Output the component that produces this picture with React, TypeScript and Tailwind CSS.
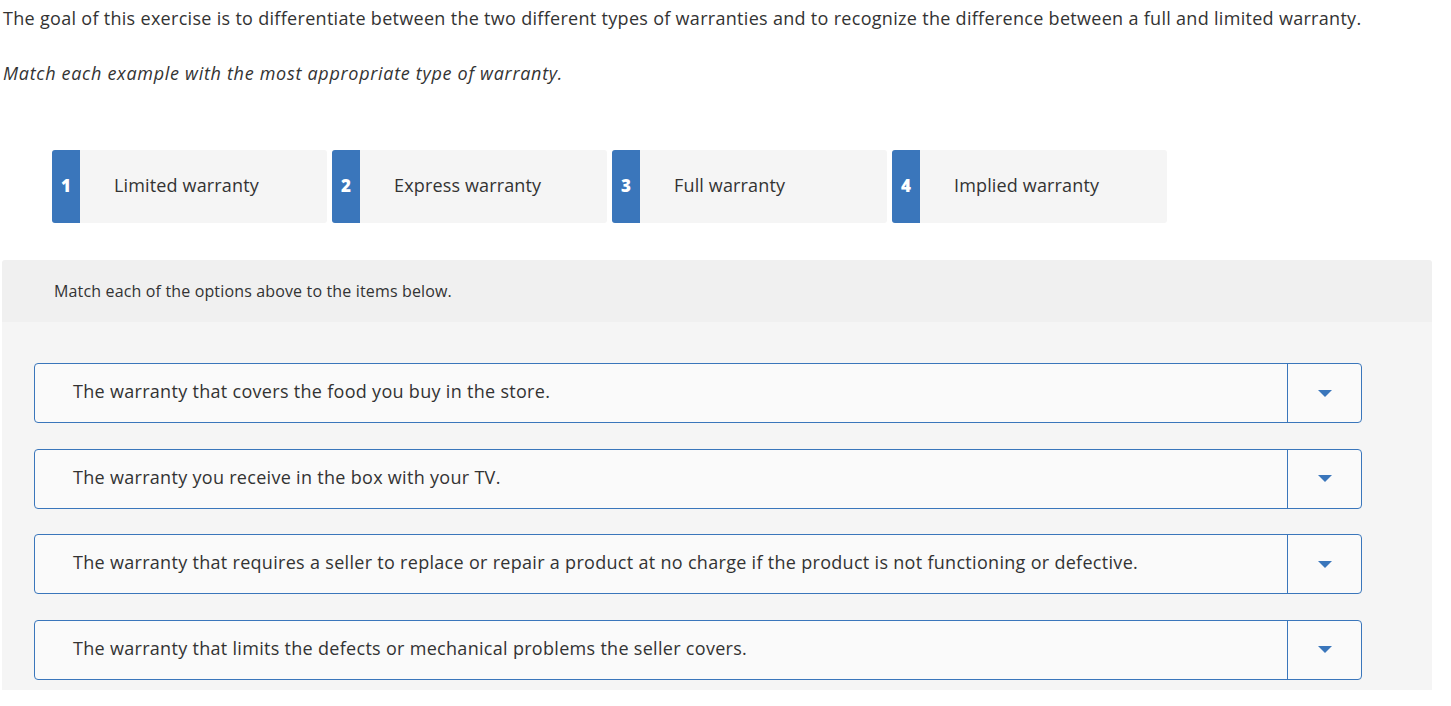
import React from "react";

const chips = [
  { n: "1", label: "Limited warranty" },
  { n: "2", label: "Express warranty" },
  { n: "3", label: "Full warranty" },
  { n: "4", label: "Implied warranty" },
];

const items = [
  "The warranty that covers the food you buy in the store.",
  "The warranty you receive in the box with your TV.",
  "The warranty that requires a seller to replace or repair a product at no charge if the product is not functioning or defective.",
  "The warranty that limits the defects or mechanical problems the seller covers.",
];

export default function App() {
  return (
    <div
      className="w-[1451px] h-[706px] bg-white text-[#333333] overflow-hidden"
      style={{ fontFamily: "'Open Sans', Lato, sans-serif" }}
    >
      <p className="pl-[3px] pt-[7px] text-[18px] leading-[22px] tracking-[0.3px]">
        The goal of this exercise is to differentiate between the two different types of warranties and to recognize the difference between a full and limited warranty.
      </p>
      <p className="pl-[3px] mt-[33px] text-[18px] leading-[22px] italic tracking-[0.7px]">
        Match each example with the most appropriate type of warranty.
      </p>
      <div className="flex gap-[5px] pl-[52px] mt-[66px]">
        {chips.map((c) => (
          <div key={c.n} className="flex w-[275px] h-[73px] bg-[#f5f5f5] rounded-[3px] overflow-hidden">
            <div className="w-[28px] bg-[#3a76bb] flex items-center justify-center text-white font-extrabold text-[17px] pb-[2px]">
              {c.n}
            </div>
            <div className="flex items-center pl-[34px] pb-[3px] text-[18px] tracking-[0.15px]">{c.label}</div>
          </div>
        ))}
      </div>
      <div className="ml-[2px] mt-[37px] w-[1430px] rounded-t-[3px] overflow-hidden">
        <div className="h-[62px] bg-[#f0f0f0] flex items-center pl-[52px] text-[16px] tracking-[0.15px]">
          Match each of the options above to the items below.
        </div>
        <div className="bg-[#f5f5f5] pl-[32px] pt-[41px] pb-[10px] flex flex-col gap-[25.5px]">
          {items.map((t, i) => (
            <div
              key={i}
              className="flex w-[1328px] h-[60px] border border-[#3a76bb] rounded-[4px] bg-[#fafafa]"
            >
              <div className="flex-1 flex items-center pl-[38px] pb-[3px] text-[18px] tracking-[0.3px]">{t}</div>
              <div className="w-[74px] border-l border-[#3a76bb] flex items-center justify-center">
                <svg width="14" height="7" viewBox="0 0 14 7">
                  <polygon points="0,0 14,0 7,7" fill="#3a76bb" />
                </svg>
              </div>
            </div>
          ))}
        </div>
      </div>
    </div>
  );
}
